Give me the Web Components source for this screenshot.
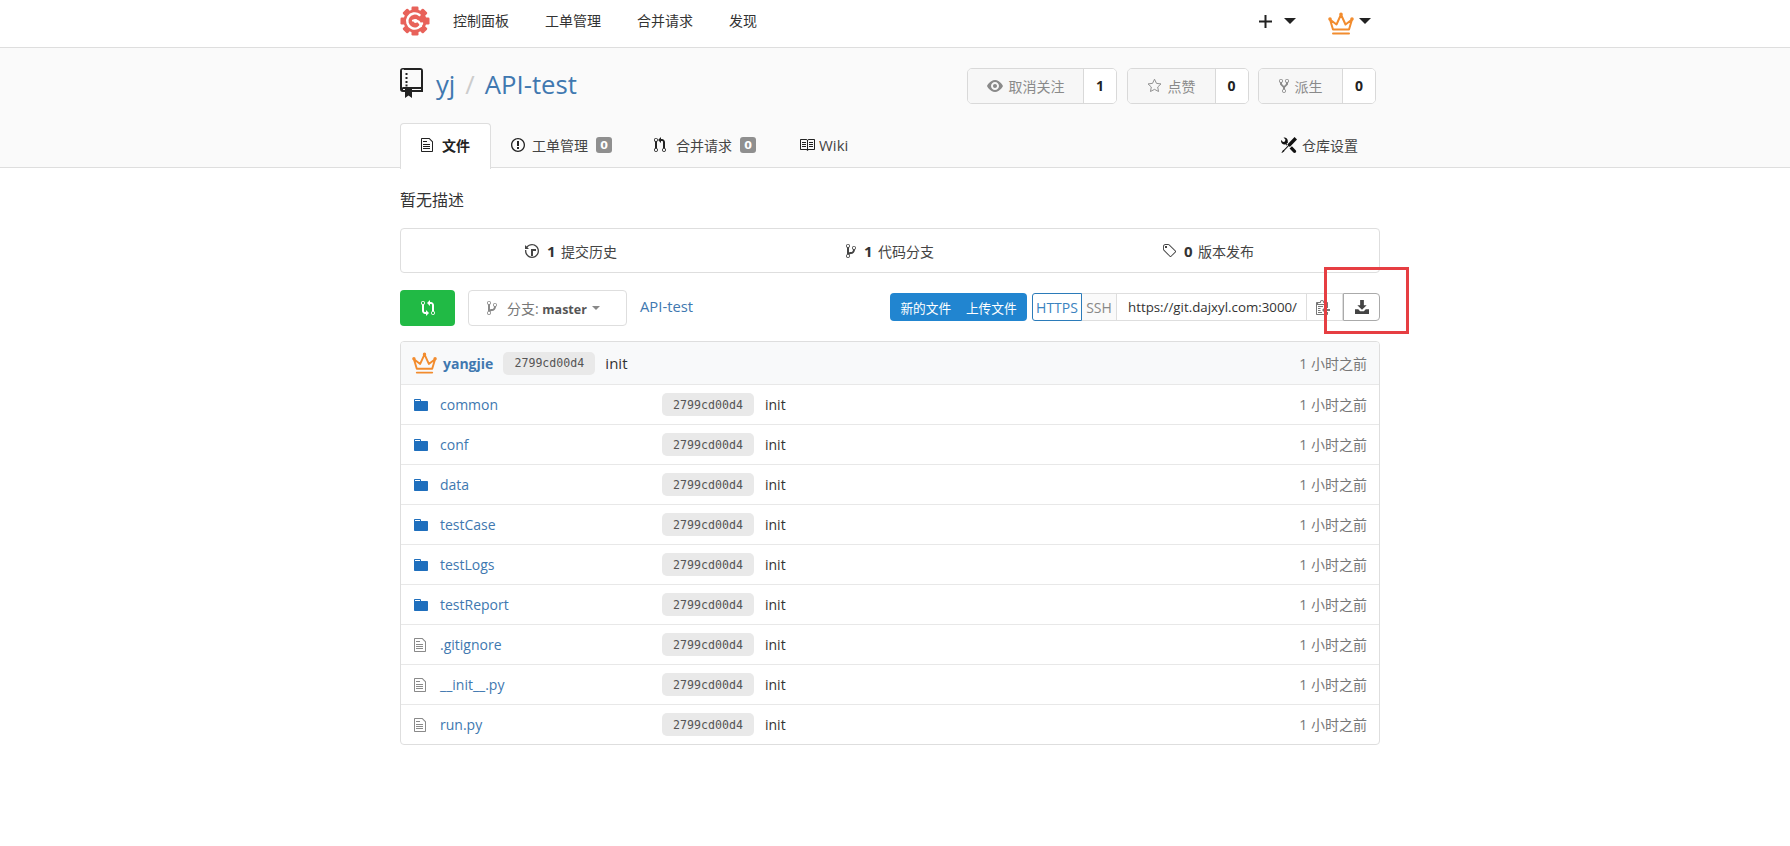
<!DOCTYPE html>
<html lang="zh"><head><meta charset="utf-8"><title>API-test</title>
<style>
html,body{margin:0;padding:0;background:#fff}
body{font-family:"Open Sans","Noto Sans CJK SC",sans-serif;font-size:14px;color:#333}
</style></head><body>
<gitea-nav></gitea-nav>
<repo-header></repo-header>
<repo-home></repo-home>
<script>
const P={
file:['0 0 12 16','M6 5H2V4h4v1zM2 8h7V7H2v1zm0 2h7V9H2v1zm0 2h7v-1H2v1zm10-7.5V14c0 .55-.45 1-1 1H1c-.55 0-1-.45-1-1V2c0-.55.45-1 1-1h7.5L12 4.5zM11 5L8 2H1v12h10V5z'],
issue:['0 0 14 16','M7 2.3c3.14 0 5.7 2.56 5.7 5.7s-2.56 5.7-5.7 5.7A5.71 5.71 0 0 1 1.3 8c0-3.14 2.56-5.7 5.7-5.7zM7 1C3.14 1 0 4.14 0 8s3.14 7 7 7 7-3.14 7-7-3.14-7-7-7zm1 3H6v5h2V4zm0 6H6v2h2v-2z'],
pr:['0 0 12 16','M11 11.28V5c-.03-.78-.34-1.47-.94-2.06C9.46 2.35 8.78 2.03 8 2H7V0L4 3l3 3V4h1c.27.02.48.11.69.31.21.2.3.42.31.69v6.28A1.993 1.993 0 0 0 10 15a1.993 1.993 0 0 0 1-3.72zm-1 2.92c-.66 0-1.2-.55-1.2-1.2 0-.65.55-1.2 1.2-1.2.65 0 1.2.55 1.2 1.2 0 .65-.55 1.2-1.2 1.2zM4 3c0-1.11-.89-2-2-2a1.993 1.993 0 0 0-1 3.72v6.56A1.993 1.993 0 0 0 2 15a1.993 1.993 0 0 0 1-3.72V4.72c.59-.34 1-.98 1-1.72zm-.8 10c0 .66-.55 1.2-1.2 1.2-.65 0-1.2-.55-1.2-1.2 0-.65.55-1.2 1.2-1.2.65 0 1.2.55 1.2 1.2zM2 4.2C1.34 4.2.8 3.65.8 3c0-.65.55-1.2 1.2-1.2.65 0 1.2.55 1.2 1.2 0 .65-.55 1.2-1.2 1.2z'],
book:['0 0 16 16','M3 5h4v1H3V5zm0 3h4V7H3v1zm0 2h4V9H3v1zm11-5h-4v1h4V5zm0 2h-4v1h4V7zm0 2h-4v1h4V9zm2-6v9c0 .55-.45 1-1 1H9.5l-1 1-1-1H2c-.55 0-1-.45-1-1V3c0-.55.45-1 1-1h5.5l1 1 1-1H15c.55 0 1 .45 1 1zm-8 .5L7.5 3H2v9h6V3.5zm7-.5H9.5l-.5.5V12h6V3z'],
eye:['0 0 16 16','M8.06 2C3 2 0 8 0 8s3 6 8.06 6C13 14 16 8 16 8s-3-6-7.94-6zM8 12c-2.2 0-4-1.78-4-4 0-2.2 1.8-4 4-4 2.22 0 4 1.8 4 4 0 2.22-1.78 4-4 4zm2-4c0 1.11-.89 2-2 2-1.11 0-2-.89-2-2 0-1.11.89-2 2-2 1.11 0 2 .89 2 2z'],
fork:['0 0 10 16','M8 1a1.993 1.993 0 0 0-1 3.72V6L5 8 3 6V4.72A1.993 1.993 0 0 0 2 1a1.993 1.993 0 0 0-1 3.72V6.5l3 3v1.78A1.993 1.993 0 0 0 5 15a1.993 1.993 0 0 0 1-3.72V9.5l3-3V4.72A1.993 1.993 0 0 0 8 1zM2 4.2C1.34 4.2.8 3.65.8 3c0-.65.55-1.2 1.2-1.2.65 0 1.2.55 1.2 1.2 0 .65-.55 1.2-1.2 1.2zm3 10c-.66 0-1.2-.55-1.2-1.2 0-.65.55-1.2 1.2-1.2.65 0 1.2.55 1.2 1.2 0 .65-.55 1.2-1.2 1.2zm3-10c-.66 0-1.2-.55-1.2-1.2 0-.65.55-1.2 1.2-1.2.65 0 1.2.55 1.2 1.2 0 .65-.55 1.2-1.2 1.2z'],
tools:['0 0 16 16','M4.48 7.27c.26.26 1.28 1.33 1.28 1.33l.56-.58-.88-.91 1.69-1.8s-.76-.74-.43-.45c.32-1.19.03-2.51-.87-3.44C4.93.5 3.66.2 2.52.51l1.93 2-.51 1.96-1.89.52-1.93-2C-.19 4.17.1 5.48 1 6.4c.94.98 2.29 1.26 3.48.87zm6.44 1.94l-2.33 2.3 3.84 3.98c.31.33.73.49 1.14.49.41 0 .82-.16 1.14-.49.63-.65.63-1.7 0-2.35l-3.79-3.93zM16 2.53L13.55 0 6.33 7.46l.88.91-4.31 4.46-.99.53-1.39 2.27.35.37 2.2-1.44.51-1.02L7.9 9.08l.88.91L16 2.53z'],
history:['0 0 14 16','M8 13H6V6h5v2H8v5zM7 1C4.81 1 2.87 2.02 1.59 3.59L0 2v4h4L2.5 4.5C3.55 3.17 5.14 2.3 7 2.3c3.14 0 5.7 2.56 5.7 5.7s-2.56 5.7-5.7 5.7A5.71 5.71 0 0 1 1.3 8c0-.34.03-.67.09-1H.08C.03 7.33 0 7.66 0 8c0 3.86 3.14 7 7 7s7-3.14 7-7-3.14-7-7-7z'],
branch:['0 0 10 16','M10 5c0-1.11-.89-2-2-2a1.993 1.993 0 0 0-1 3.72v.3c-.02.52-.23.98-.63 1.38-.4.4-.86.61-1.38.63-.83.02-1.48.16-2 .45V4.72a1.993 1.993 0 0 0-1-3.72C.88 1 0 1.89 0 3a2 2 0 0 0 1 1.72v6.56c-.59.35-1 .99-1 1.72 0 1.11.89 2 2 2 1.11 0 2-.89 2-2 0-.53-.2-1-.53-1.36.09-.06.48-.41.59-.47.25-.11.56-.17.94-.17 1.05-.05 1.95-.45 2.75-1.25S8.95 7.77 9 6.73h-.02C9.59 6.37 10 5.73 10 5zM2 1.8c.66 0 1.2.55 1.2 1.2 0 .65-.55 1.2-1.2 1.2C1.35 4.2.8 3.65.8 3c0-.65.55-1.2 1.2-1.2zm0 12.41c-.66 0-1.2-.55-1.2-1.2 0-.65.55-1.2 1.2-1.2.65 0 1.2.55 1.2 1.2 0 .65-.55 1.2-1.2 1.2zm6-8c-.66 0-1.2-.55-1.2-1.2 0-.65.55-1.2 1.2-1.2.65 0 1.2.55 1.2 1.2 0 .65-.55 1.2-1.2 1.2z'],
tag:['0 0 14 16','M7.73 1.73C7.26 1.26 6.62 1 5.96 1H3.5C2.13 1 1 2.13 1 3.5v2.47c0 .66.27 1.3.73 1.77l6.06 6.06c.39.39 1.02.39 1.41 0l4.59-4.59a.996.996 0 0 0 0-1.41L7.73 1.73zM2.38 7.09c-.31-.3-.47-.7-.47-1.13V3.5c0-.88.72-1.59 1.59-1.59h2.47c.42 0 .83.16 1.13.47l6.14 6.13-4.73 4.73-6.13-6.15zM3.01 3h2v2H3V3h.01z'],
clippy:['0 0 14 16','M2 13h4v1H2v-1zm5-6H2v1h5V7zm2 3V8l-3 3 3 3v-2h5v-2H9zM4.5 9H2v1h2.5V9zM2 12h2.5v-1H2v1zm9 1h1v2c-.02.28-.11.52-.3.7-.19.18-.42.28-.7.3H1c-.55 0-1-.45-1-1V4c0-.55.45-1 1-1h3c0-1.11.89-2 2-2 1.11 0 2 .89 2 2h3c.55 0 1 .45 1 1v5h-1V6H1v9h10v-2zM2 5h8c0-.55-.45-1-1-1H8c-.55 0-1-.45-1-1s-.45-1-1-1-1 .45-1 1-.45 1-1 1H3c-.55 0-1 .45-1 1z'],
compare:['0 0 14 16','M5 12H4c-.27-.02-.48-.11-.69-.31-.21-.2-.3-.42-.31-.69V4.72A1.993 1.993 0 0 0 2 1a1.993 1.993 0 0 0-1 3.72V11c.03.78.34 1.47.94 2.06.6.59 1.28.91 2.06.94h1v2l3-3-3-3v2zM2 1.8c.66 0 1.2.55 1.2 1.2 0 .65-.55 1.2-1.2 1.2C1.35 4.2.8 3.65.8 3c0-.65.55-1.2 1.2-1.2zm11 9.48V5c-.03-.78-.34-1.47-.94-2.06-.6-.59-1.28-.91-2.06-.94H9V0L6 3l3 3V4h1c.27.02.48.11.69.31.21.2.3.42.31.69v6.28A1.993 1.993 0 0 0 12 15a1.993 1.993 0 0 0 1-3.72zm-1 2.92c-.66 0-1.2-.55-1.2-1.2 0-.65.55-1.2 1.2-1.2.65 0 1.2.55 1.2 1.2 0 .65-.55 1.2-1.2 1.2z'],
dir:['0 0 14 16','M13 4H7V3c0-.66-.31-1-1-1H1c-.55 0-1 .45-1 1v10c0 .55.45 1 1 1h12c.55 0 1-.45 1-1V5c0-.55-.45-1-1-1zM6 4H1V3h5v1z'],
};
function ic(n,h=16,c='currentColor'){const [v,d]=P[n];const w=v.split(' ')[2]*h/16;return `<svg width="${w}" height="${h}" viewBox="${v}" fill="${c}" style="display:block;flex:none"><path fill-rule="evenodd" d="${d}"/></svg>`}
const crown=(w,h)=>`<svg width="${w}" height="${h}" viewBox="0 0 26 22" fill="none" stroke="#f28c2e" stroke-width="2" stroke-linejoin="round" stroke-linecap="round" style="display:block;flex:none"><path d="M2 7l6.500 5L13 2l4.500 10L24 7l-3 10H5z"/><path d="M5 21h16"/><circle cx="2" cy="6.500" r=".8"/><circle cx="13" cy="1.800" r=".8"/><circle cx="24" cy="6.500" r=".8"/></svg>`;
const caret=(c='#222',w=10,h=5)=>`<span style="display:block;flex:none;width:0;height:0;border-left:${w/2}px solid transparent;border-right:${w/2}px solid transparent;border-top:${h}px solid ${c}"></span>`;
const logo=`<svg width="30" height="30" viewBox="0 0 30 30" style="display:block;flex:none"><g fill="#e8625a">${[0,45,90,135,180,225,270,315].map(a=>`<rect x="11.500" y="0.500" width="7" height="6" rx="1.200" transform="rotate(${a} 15 15)"/>`).join('')}<circle cx="15" cy="15" r="11.500"/></g><path d="M22 17.500A7.600 7.600 0 1 1 19.500 9" fill="none" stroke="#fff" stroke-width="2.400" stroke-linecap="round"/><path d="M21 20c-1-4-4-6-8-5.500" fill="none" stroke="#fff" stroke-width="2.200" stroke-linecap="round"/><circle cx="15.500" cy="15" r="2" fill="#fff"/></svg>`;
function el(tag,css,html){
  customElements.define(tag,class extends HTMLElement{
    connectedCallback(){ if(this.shadowRoot)return; const r=this.attachShadow({mode:'open'});
      r.innerHTML=`<style>${css}</style>`+(typeof html==='function'?html(this):html);}
  });
}
const base=`:host{display:block;box-sizing:border-box}*{box-sizing:border-box}a{color:inherit;text-decoration:none}`;
el('gitea-nav',base+`
:host{height:48px;border-bottom:1px solid #dedede;background:#fff;padding-left:400px}
.w{width:980px;height:47px;display:flex;align-items:center;color:#333}
.logo{margin-right:23px;margin-top:-6px}
nav{display:flex;gap:36px;margin-top:-8px;font-size:14px;color:#333}
.r{margin-left:auto;display:flex;align-items:center;margin-top:-5px;padding-right:9px}
.plus{margin-right:12px}
.mid{margin-right:32px}
.cr{margin-top:5px}
.ca{margin-left:5px}
`,`<div class="w"><div class="logo">${logo}</div><nav><a>控制面板</a><a>工单管理</a><a>合并请求</a><a>发现</a></nav>
<div class="r"><svg class="plus" width="13" height="13" viewBox="0 0 13 13" fill="#222"><path d="M5.500 0h2v5.500H13v2H7.500V13h-2V7.500H0v-2h5.500z"/></svg><span class="mid">${caret('#222',12,6)}</span><span class="cr">${crown(26,23)}</span><span class="ca">${caret('#222',12,6)}</span></div></div>`);

el('count-btn',base+`
:host{display:flex;height:36px;border:1px solid #d9d9d9;border-radius:5px;font-size:14px;overflow:hidden}
.a{display:flex;align-items:center;justify-content:center;gap:6px;background:#f7f7f7;color:#8a8a8a;border-right:1px solid #d9d9d9;height:100%}
.b{display:flex;align-items:center;justify-content:center;background:#fff;font-weight:700;color:#222;font-size:14px}
`,h=>`<div class="a" style="width:${h.getAttribute('aw')}px">${h.getAttribute('icon')==='star'?`<svg width="15" height="15" viewBox="0 0 16 16" fill="none" stroke="#8a8a8a" stroke-linejoin="round" style="display:block"><path d="M8 1.300l2.100 4.400 4.800.6-3.500 3.300.9 4.800L8 12.100l-4.300 2.300.9-4.800L1.100 6.300l4.800-.6z"/></svg>`:ic(h.getAttribute('icon'),16,'#8a8a8a')}<slot></slot></div><div class="b" style="width:${h.getAttribute('bw')}px">${h.getAttribute('n')}</div>`);

el('repo-header',base+`
:host{height:120px;background:#fafafa;border-bottom:1px solid #dedede;padding-left:400px}
.w{width:980px}
.t{height:75px;display:flex;align-items:center;justify-content:space-between;padding-top:2px;padding-right:4px}
.n{display:flex;align-items:center;font-size:25.700px;color:#4078b0;line-height:1;margin-top:-4px}
.n svg{margin-right:13px;margin-top:-4px}
.s{color:#ccc;margin:0 10px}
.btns{display:flex;gap:9.500px;margin-top:-2px}
.tabs{display:flex;align-items:stretch;height:45px;font-size:14px;color:#444;padding-bottom:1px}
.tab{display:flex;align-items:center;height:44px}
.act{width:91px;justify-content:center;background:#fff;border:1px solid #dedede;border-bottom:0;border-radius:4px 4px 0 0;font-weight:700;color:#222;height:46px;gap:9px;padding-bottom:3px}
.lb{font-size:11px;font-weight:700;background:#8f8f8f;color:#fff;border-radius:3px;width:16px;height:16px;display:flex;align-items:center;justify-content:center;font-family:"DejaVu Sans",sans-serif}
.i1{margin-left:20px;gap:7px}
.i1 .lb{margin-left:1px}
.i2{margin-left:42px;gap:8px}
.i2 svg{margin-right:2px}
.i3{margin-left:43px;gap:4px}
.w3{font-size:15px}
.right{margin-left:auto;padding-right:22px;gap:5px}
`,`<div class="w"><div class="t"><div class="n"><svg width="23" height="30" viewBox="0 0 23 30" fill="#222"><path fill-rule="evenodd" d="M3 0h17a3 3 0 0 1 3 3v21H3a3 3 0 0 1-3-3V3a3 3 0 0 1 3-3zm1 2h17v17H4a2 2 0 0 0-2 .5V3a1 1 0 0 1 2-1zM3 21h18v1H3z"/><path d="M5.500 5h2v2h-2zm0 4h2v2h-2zm0 4h2v2h-2zm0 3.500h2v2h-2z"/><path d="M5 21h7v9l-3.500-2.500L5 30z"/></svg><a>yj</a><span class="s">/</span><a>API-test</a></div>
<div class="btns"><count-btn icon="eye" n="1" aw="116" bw="32">取消关注</count-btn><count-btn icon="star" n="0" aw="88" bw="32">点赞</count-btn><count-btn icon="fork" n="0" aw="84" bw="32">派生</count-btn></div></div>
<div class="tabs"><a class="tab act">${ic('file',16,'#222')}文件</a>
<a class="tab i1">${ic('issue',16,'#222')}工单管理<span class="lb">0</span></a>
<a class="tab i2">${ic('pr',16,'#222')}合并请求<span class="lb">0</span></a>
<a class="tab i3">${ic('book',16,'#222')}<span class="w3">Wiki</span></a>
<a class="tab right">${ic('tools',16,'#111')}仓库设置</a></div></div>`);

el('stat-bar',base+`
:host{height:45px;border:1px solid #dedede;border-radius:4px;display:grid;grid-template-columns:1fr 1fr 1fr;font-size:14px;color:#444}
div{display:flex;align-items:center;justify-content:center;gap:8px}
b{color:#333;font-size:15px;margin-right:2px}
.s{padding-left:14px}
.e{padding-right:16px}
`,`<div class="s">${ic('history',16,'#444')}<span><b>1</b> 提交历史</span></div><div>${ic('branch',16,'#444')}<span><b>1</b> 代码分支</span></div><div class="e">${ic('tag',16,'#444')}<span><b>0</b> 版本发布</span></div>`);

el('repo-toolbar',base+`
:host{position:relative;display:flex;align-items:center;height:37px;font-size:12.500px}
.g{width:55px;height:36px;background:#21ba45;border-radius:4px;display:flex;align-items:center;justify-content:center;color:#fff;margin-right:13px}
.br{width:159px;height:36px;border:1px solid #dedede;border-radius:4px;display:flex;align-items:center;padding-left:18px;gap:10px;color:#777;font-size:14px;background:#fff;margin-right:13px}
.br b{color:#555;font-size:12.500px}
.br i{margin-left:-5px;margin-top:1px}
.path{color:#4078b0;font-size:14.800px;margin-top:-3px}
.right{margin-left:auto;display:flex;align-items:center;height:28px;margin-top:-1px}
.blue{display:flex;background:#2185d0;color:#fff;border-radius:4px;height:28px;width:137px;align-items:center;justify-content:space-around;padding:0 3px;margin-right:5px;font-size:12.700px}
.h{height:28px;display:flex;align-items:center;justify-content:center;font-size:14px}
.https{width:50px;border:1px solid #2b7bb9;color:#3b83bf;border-radius:3px 0 0 3px}
.ssh{width:35px;border:1px solid #dedede;border-left:0;color:#888;background:#fafafa}
.url{width:190px;border:1px solid #dedede;border-left:0;color:#333;padding-left:11px;justify-content:flex-start;white-space:nowrap;font-size:13.300px}
.clip{width:36px;border:1px solid #dedede;border-left:0;justify-content:flex-start;padding-left:9px}
.dl{width:37px;border:1px solid #aaa;border-radius:0 4px 4px 0;color:#444;background:#fff}
.mark{position:absolute;left:924px;top:-22px;width:85px;height:67px;border:3px solid #e63e42;pointer-events:none}
`,`<a class="g">${ic('compare',16,'#fff')}</a><div class="br">${ic('branch',16,'#888')}<span>分支: <b>master</b></span><i>${caret('#888',8,4)}</i></div><a class="path">API-test</a>
<div class="right"><div class="blue"><span>新的文件</span><span>上传文件</span></div><a class="h https">HTTPS</a><a class="h ssh">SSH</a><div class="h url"><span>https://git.dajxyl.com:3000/</span></div><a class="h clip">${ic('clippy',16,'#777')}</a><a class="h dl"><svg width="14" height="14" viewBox="0 0 15 15" fill="#444"><path d="M5.500 0h4v5.500h3L7.500 10.500 2.500 5.500h3z"/><path d="M0 10h3.500l2 2h4l2-2H15v5H0z"/></svg></a></div><div class="mark"></div>`);

const ROWCSS=`:host{display:grid;align-items:center;height:40px;border-top:1px solid #e8e8e8;grid-template-columns:39px 222px 103px 1fr auto;font-size:14px}
.i{padding-left:13px;color:#888}.n{color:#4078b0}
.sha{width:92px;height:23px;background:#e9e9e9;border-radius:5px;display:flex;align-items:center;justify-content:center;font-family:"DejaVu Sans Mono",monospace;font-size:11.600px;color:#555}
.m{color:#333}.t{color:#777;font-size:14px;padding-right:12px;margin-top:-2px}`;
el('file-row',base+ROWCSS,h=>{const d=h.hasAttribute('dir');return `<span class="i">${d?ic('dir',16,'#1f6fbd'):ic('file',16,'#8a8a8a')}</span><a class="n">${h.getAttribute('name')}</a><span class="sha">2799cd00d4</span><span class="m">init</span><span class="t">1 小时之前</span>`});
el('commit-head',base+`
:host{height:42px;background:#f8f9fa;display:flex;align-items:center;font-size:14px;padding-left:11px}
b{color:#4078b0;margin-left:6px;margin-right:10px;font-size:14px}
.sha{width:92px;height:23px;background:#e9e9e9;border-radius:5px;display:flex;align-items:center;justify-content:center;font-family:"DejaVu Sans Mono",monospace;font-size:11.600px;color:#555;margin-right:10px}
.i{font-size:15px}
.t{margin-left:auto;color:#777;font-size:14px;padding-right:12px}
`,`${crown(25,22)}<b>yangjie</b><span class="sha">2799cd00d4</span><span class="i">init</span><span class="t">1 小时之前</span>`);
el('repo-home',base+`
:host{padding-left:400px}
.w{width:980px}
.d{font-size:16px;color:#333;height:60px;display:flex;align-items:center;padding-top:4px;padding-bottom:2px}
.tb{border:1px solid #dedede;border-radius:4px;overflow:hidden;margin-top:15px}
stat-bar{margin-bottom:16px}
`,`<div class="w"><div class="d">暂无描述</div><stat-bar></stat-bar><repo-toolbar></repo-toolbar>
<div class="tb"><commit-head></commit-head>
<file-row dir name="common"></file-row><file-row dir name="conf"></file-row><file-row dir name="data"></file-row><file-row dir name="testCase"></file-row><file-row dir name="testLogs"></file-row><file-row dir name="testReport"></file-row><file-row name=".gitignore"></file-row><file-row name="__init__.py"></file-row><file-row name="run.py"></file-row></div></div>`);
</script>
</body></html>
